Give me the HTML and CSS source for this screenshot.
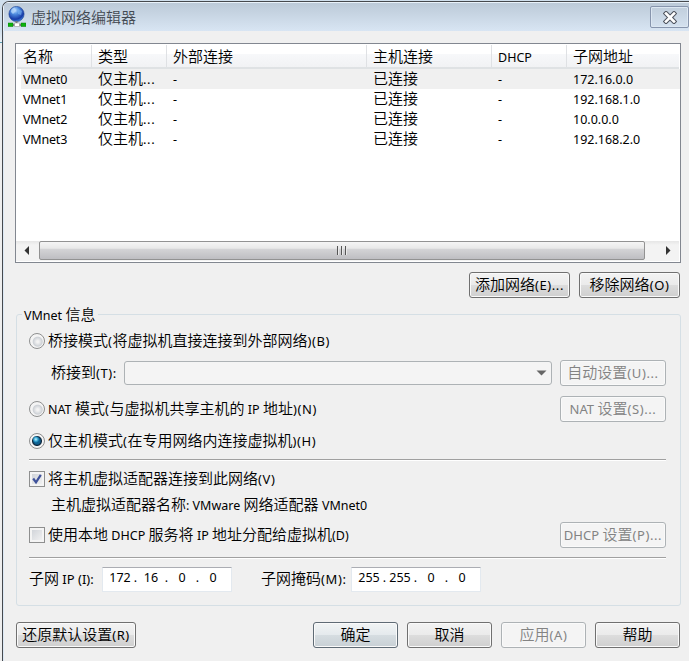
FILE: index.html
```html
<!DOCTYPE html>
<html lang="zh-CN">
<head>
<meta charset="utf-8">
<title>虚拟网络编辑器</title>
<link rel="stylesheet" href="styles.css">
</head>
<body>
<div class="window">
  <header class="titlebar">
    <svg class="app-icon" width="18" height="21" viewBox="0 0 18 21">
      <defs>
        <radialGradient id="globe" cx=".4" cy=".25" r=".75"><stop offset="0" stop-color="#b9dcff"/><stop offset=".35" stop-color="#4f8de0"/><stop offset=".8" stop-color="#173ba8"/><stop offset="1" stop-color="#3d83d8"/></radialGradient>
      </defs>
      <circle cx="8.5" cy="8" r="7.6" fill="url(#globe)" stroke="#173a91" stroke-width=".6"/>
      <path d="M3 6 Q3 2 7 1.5 L8 5 L5 8Z" fill="#b5d7fb" opacity=".75"/>
      <path d="M10 3l4 2-1 4-3-1z" fill="#79b3f0" opacity=".6"/>
      <path d="M7.5 15h2v2h-2z" fill="#777"/>
      <path d="M0 17h5v3.5H0zM13 17h5v3.5h-5z" fill="#0cb30c" stroke="#087a08" stroke-width=".5"/>
      <path d="M5 18h8v2H5z" fill="#777"/><path d="M6.500 17h5v3.500h-5z" fill="#fff" stroke="#888" stroke-width=".5"/>
    </svg>
    <h1>虚拟网络编辑器</h1>
    <div class="close">
      <svg width="14" height="13" viewBox="0 0 14 13"><path d="M3 2.500L11 10.500M11 2.500L3 10.500" stroke="#50555f" stroke-width="4.600" stroke-linecap="square"/><path d="M3 2.500L11 10.500M11 2.500L3 10.500" stroke="#fff" stroke-width="2.600" stroke-linecap="square"/></svg>
    </div>
  </header>
  <main>
    <section class="list">
      <div class="row head"><span>名称</span><span>类型</span><span>外部连接</span><span>主机连接</span><span><i>DHCP</i></span><span>子网地址</span></div>
      <div class="row selected"><span><i>VMnet0</i></span><span>仅主机<i class="p">...</i></span><span><i>-</i></span><span>已连接</span><span><i>-</i></span><span><i>172.16.0.0</i></span></div>
      <div class="row"><span><i>VMnet1</i></span><span>仅主机<i class="p">...</i></span><span><i>-</i></span><span>已连接</span><span><i>-</i></span><span><i>192.168.1.0</i></span></div>
      <div class="row"><span><i>VMnet2</i></span><span>仅主机<i class="p">...</i></span><span><i>-</i></span><span>已连接</span><span><i>-</i></span><span><i>10.0.0.0</i></span></div>
      <div class="row"><span><i>VMnet3</i></span><span>仅主机<i class="p">...</i></span><span><i>-</i></span><span>已连接</span><span><i>-</i></span><span><i>192.168.2.0</i></span></div>
      <div class="scrollbar">
        <svg width="23" height="19" viewBox="0 0 23 19"><path d="M13 5v9L8.500 9.500z" fill="#333"/></svg>
        <div class="thumb"><b></b><b></b><b></b></div>
        <svg width="34" height="19" viewBox="0 0 34 19"><path d="M21 5v9L25.500 9.500z" fill="#333"/></svg>
      </div>
    </section>
    <div class="list-actions">
      <div class="btn w101">添加网络<i class="p">(E)...</i></div>
      <div class="btn w101">移除网络<i class="p">(O)</i></div>
    </div>
    <fieldset>
      <legend><i>VMnet</i> 信息</legend>
      <div class="line first"><span class="radio"></span><span>桥接模式<i class="p">(</i>将虚拟机直接连接到外部网络<i class="p">)(B)</i></span></div>
      <div class="line bridge"><span class="indent">桥接到<i class="p">(T):</i></span><div class="combo"><svg width="11" height="6" viewBox="0 0 11 6"><path d="M.5 .5h10L5.500 5.500z" fill="#666"/></svg></div><div class="btn off w106">自动设置<i class="p">(U)...</i></div></div>
      <div class="line nat"><span class="radio"></span><span><i>NAT</i> 模式<i class="p">(</i>与虚拟机共享主机的 <i>IP</i> 地址<i class="p">)(N)</i></span><div class="btn off w106 end"><i class="n">NAT</i>&nbsp;设置<i class="p">(S)...</i></div></div>
      <div class="line"><span class="radio on"></span><span>仅主机模式<i class="p">(</i>在专用网络内连接虚拟机<i class="p">)(H)</i></span></div>
      <div class="rule rule-a"></div>
      <div class="line connect"><span class="check"><svg width="12" height="12" viewBox="0 0 12 12"><path d="M2.200 5.500L5 9.300L9.800 1.800" fill="none" stroke="#3f529b" stroke-width="2.200"/></svg></span><span>将主机虚拟适配器连接到此网络<i class="p">(V)</i></span></div>
      <div class="line adapter"><span class="indent">主机虚拟适配器名称<i>: VMware</i> 网络适配器 <i>VMnet0</i></span></div>
      <div class="line dhcp"><span class="check"></span><span>使用本地 <i>DHCP</i> 服务将 <i>IP</i> 地址分配给虚拟机<i>(D)</i></span><div class="btn off w106 end"><i class="n">DHCP</i>&nbsp;设置<i class="p">(P)...</i></div></div>
      <div class="rule rule-b"></div>
      <div class="line subnet">
        <span class="ip-label">子网 <i class="n">IP (I):</i></span>
        <div class="ip"><i>172</i><em>.</em><i>16</i><em>.</em><i>0</i><em>.</em><i>0</i></div>
        <span class="mask-label">子网掩码<i class="p">(M):</i></span>
        <div class="ip"><i>255</i><em>.</em><i>255</i><em>.</em><i>0</i><em>.</em><i>0</i></div>
      </div>
    </fieldset>
    <footer>
      <div class="btn w120">还原默认设置<i class="p">(R)</i></div>
      <div class="btn w85 default">确定</div>
      <div class="btn w85">取消</div>
      <div class="btn w85 off">应用<i class="p">(A)</i></div>
      <div class="btn w85">帮助</div>
    </footer>
  </main>
</div>
</body>
</html>
```
FILE: styles.css
```css
* { box-sizing: border-box; }
html { height: 100%; overflow: hidden; }
body {
  margin: 0;
  padding: 1px 0 0 2px;
  height: 661px;
  overflow: hidden;
  background: linear-gradient(#d0dfec 0 30px, #e9eff5 42px 42px, #5e9eb1 42px 43px, #eee 43px);
  font: 350 15px/20px "Noto Sans CJK SC", sans-serif;
  color: #000;
  white-space: nowrap;
}
i, em {
  font-family: "Noto Sans", "Noto Sans CJK SC", sans-serif;
  font-style: normal;
  font-weight: 400;
  font-size: 12.5px;
  line-height: 1;
}
i.p { font-size: 13px; letter-spacing: .6px; }
i.n { font-size: 13px; }
.window {
  height: 660px;
  border: solid #46494d;
  border-width: 1px 0 0 1px;
  border-radius: 7px 0 0 0;
  background: #f0f0f0;
  overflow: hidden;
}
.titlebar {
  display: flex;
  height: 29px;
  padding-left: 4px;
  border-top: 1px solid #e9f2fa;
  border-left: 1px solid #e9f2fa;
  background: linear-gradient(#bccad8, #d8e5f3);
}
.app-icon { margin-top: 3px; }
h1 { margin: 4px 0 0 5px; font-size: 15px; font-weight: 350; line-height: 20px; color: #434a52; }
.close {
  display: flex;
  align-items: center;
  justify-content: center;
  width: 39px;
  height: 22px;
  margin: 3px 0 0 auto;
  border: 1px solid #8795ad;
  border-radius: 2px;
  box-shadow: inset 0 0 0 1px #dce7f2;
}
main { height: 630px; padding: 12px 9px 0 11px; border-left: 1px solid #dce8f4; }

.list {
  display: flex;
  flex-direction: column;
  width: 666px;
  height: 220px;
  border: 1px solid #828790;
  background: #fff;
}
.row {
  display: grid;
  grid-template-columns: 70px 75px 200px 125px 75px 1fr;
  height: 20px;
  margin-left: 5px;
  line-height: 18px;
}
.row span { padding-left: 7px; height: 20px; }
.row span:first-child { padding-left: 2px; letter-spacing: -.2px; }
.row.head {
  grid-template-columns: 71px 75px 200px 125px 75px 1fr;
  height: 25px;
  margin: 0 1px;
  padding: 1px 0 0 4px;
  line-height: 21px;
  border-bottom: 2px solid #dfe2e4;
  background: linear-gradient(#fff 0 45%, #f7f8fa 45%, #f1f2f4);
}
.row.head span { height: 22px; padding-left: 6px; border-right: 1px solid #dfe1e4; }
.row.head span:first-child { padding-left: 2px; letter-spacing: 0; }
.row.head span:last-child { border: 0; }
.selected { background: #f0f0f0; }
.scrollbar {
  display: flex;
  height: 20px;
  margin: auto 1px 1px 0;
  background: linear-gradient(#e6e6e6, #f3f3f3 4px);
}
.thumb {
  display: flex;
  flex: 1;
  gap: 2px;
  justify-content: center;
  align-items: center;
  height: 19px;
  border: 1px solid #929292;
  border-radius: 2px;
  background: linear-gradient(#f5f5f5, #e8e8e8 38%, #d5d5d7 39%, #bebec2);
}
.thumb b { width: 2px; height: 9px; background: linear-gradient(90deg, #555 50%, #e9e9e9 50%); }

.btn {
  display: flex;
  align-items: center;
  justify-content: center;
  height: 26px;
  padding-bottom: 2px;
  border: 1px solid #707070;
  border-radius: 3px;
  box-shadow: inset 0 0 0 1px #fafafa;
  background: linear-gradient(#f3f3f3, #ebebeb 48%, #dddddd 50%, #cfcfcf);
}
.btn i { position: relative; top: 1px; }
.btn.default { border-color: #5f6b75; background: linear-gradient(#f1f4f5, #e5eaed 48%, #d6dde1 50%, #c8d0d5); }
.btn.off { border-color: #adb2b5; background: #f4f4f4; color: #838383; }
.w85 { width: 85px; }
.w101 { width: 101px; }
.w106 { width: 106px; }
.w120 { width: 120px; }
.end { margin-left: auto; }
.list-actions { display: flex; gap: 9px; justify-content: flex-end; height: 26px; margin-top: 9px; }

fieldset {
  width: 665px;
  height: 302px;
  margin: 6px 0 0 1px;
  padding: 1px 14px 0 12px;
  border: 1px solid #d5dfe5;
  border-radius: 3px;
  min-width: 0;
}
legend { height: 20px; margin-left: -7px; padding: 0 2px; }
.line { display: flex; align-items: center; height: 32px; }
.line > span:not(.radio):not(.check) { margin-top: -2px; }
.radio {
  width: 16px;
  height: 16px;
  margin-right: 3px;
  border: 1px solid #8e8f8f;
  border-radius: 50%;
  background: radial-gradient(circle at 55% 55%, #f3f3f3 0 1px, #cdd1d6 4.500px, #f4f4f4 5.500px);
}
.radio.on { background: radial-gradient(circle at 42% 38%, #c5f3ff 0, #35a5d2 2px, transparent 3.500px), radial-gradient(circle, #0d6191 0 3px, #10273d 4.500px, #f4f4f4 5.500px); }
.check {
  display: flex;
  width: 16px;
  height: 16px;
  margin-right: 3px;
  padding: 1px;
  border: 1px solid #8e8f8f;
  box-shadow: inset 0 0 0 2px #f4f4f4;
  background: linear-gradient(135deg, #cbcfd5, #f6f6f6);
}
.indent { width: 95px; padding-left: 22px; }
.combo {
  display: flex;
  align-items: center;
  justify-content: flex-end;
  width: 428px;
  height: 24px;
  margin-right: 8px;
  padding-right: 4px;
  border: 1px solid #adb2b5;
  border-radius: 3px;
  background: #f4f4f4;
}
.nat { margin-top: 4px; }
.rule { height: 2px; border-top: 1px solid #a0a0a0; border-bottom: 1px solid #fff; }
.rule-a { margin-top: 2px; }
.connect { height: 28px; margin-top: 4px; }
.adapter { height: 24px; }
.dhcp { margin-top: 2px; }
.rule-b { margin-top: 6px; }
.subnet { margin-top: 4px; }
.ip-label { width: 73px; }
.mask-label { width: 119px; padding-left: 29px; }
.ip {
  display: grid;
  grid-template-columns: 24px 7px 24px 7px 24px 7px 24px;
  align-items: center;
  width: 130px;
  height: 25px;
  padding: 0 0 1px 5px;
  border: 1px solid #e3e9ef;
  border-top-color: #abadb3;
  background: #fff;
  text-align: center;
}
footer { display: flex; gap: 9px; height: 26px; margin: 16px 0 0 1px; }
footer .w120 { margin-right: 168px; }
```
